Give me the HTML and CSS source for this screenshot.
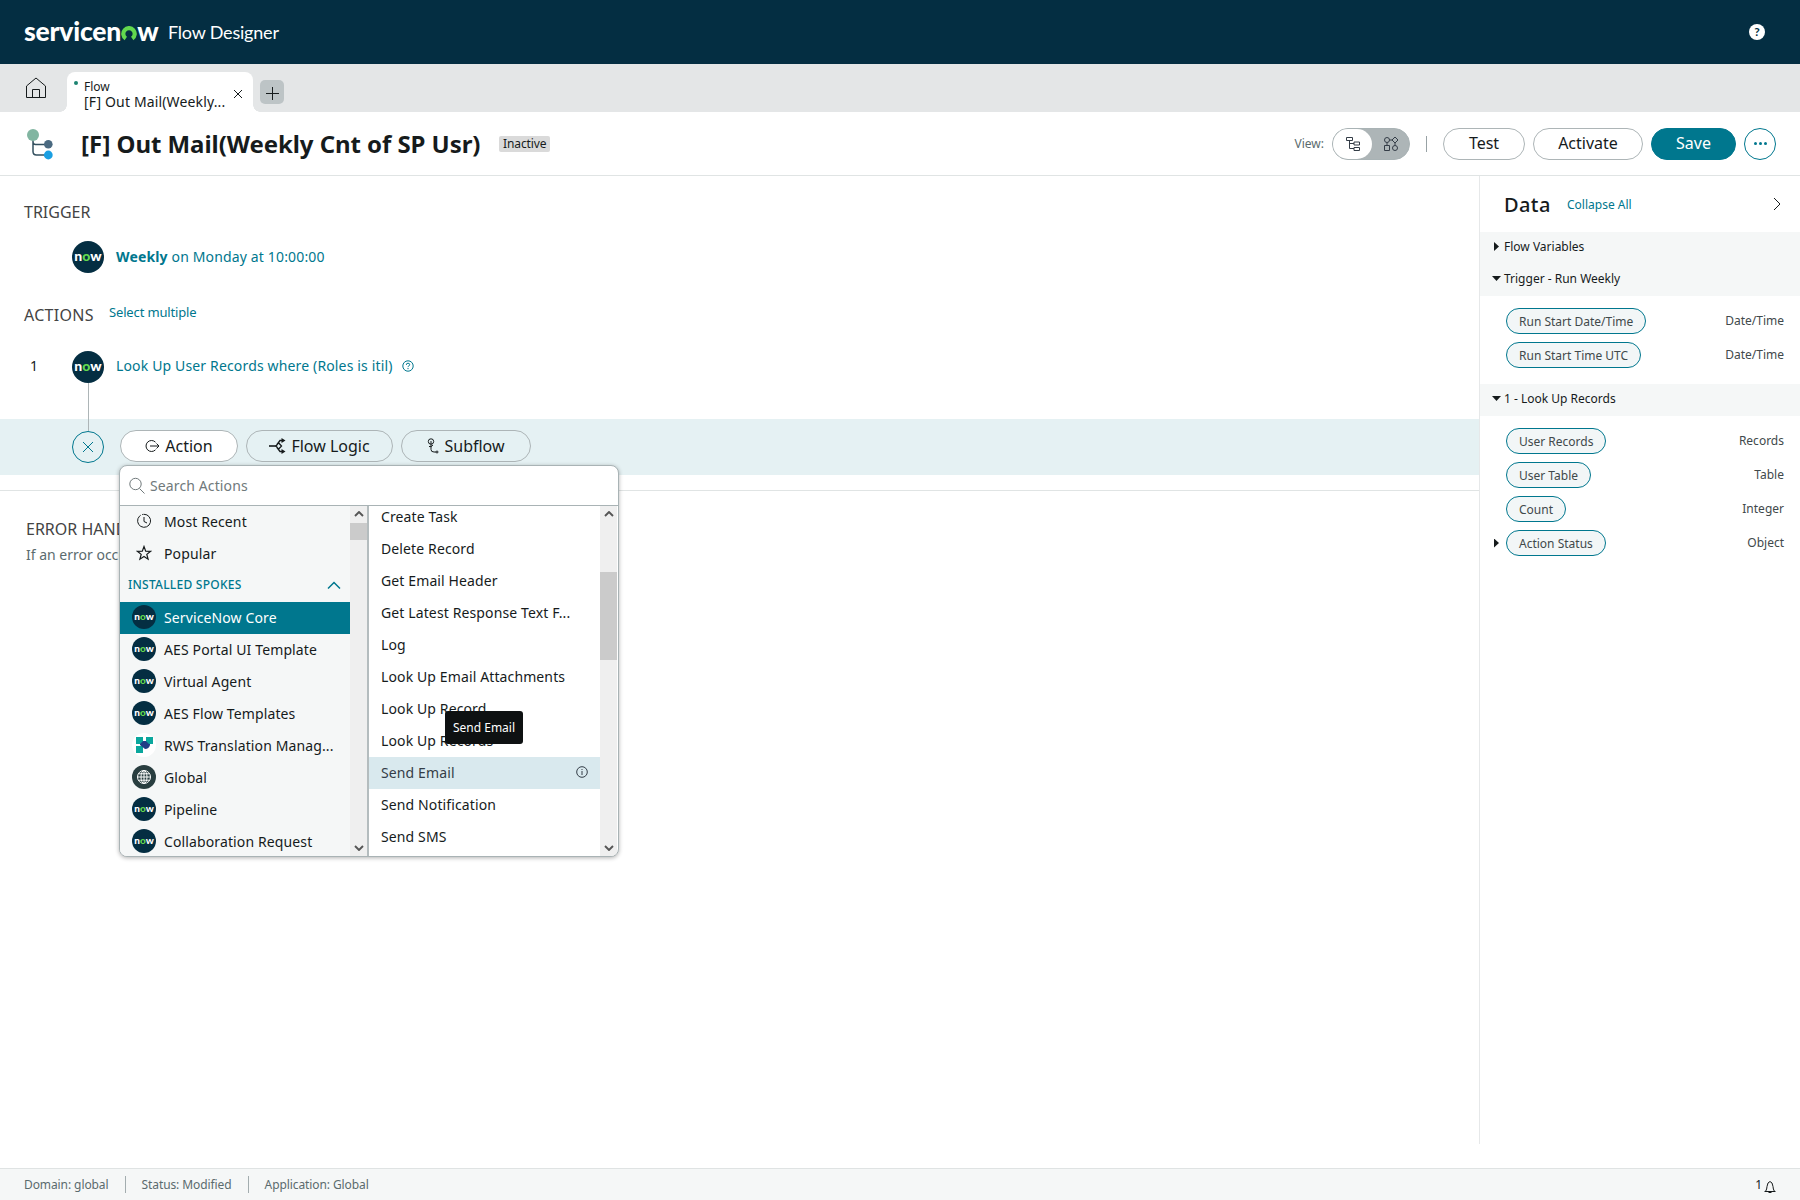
FILE: index.html
```html
<!DOCTYPE html>
<html lang="en">

<head>
    <meta charset="UTF-8">
    <meta name="viewport" content="width=device-width, initial-scale=1.0">
    <title>Flow Designer</title>
    <link rel="stylesheet" href="styles.css">
</head>

<body>
    <header class="header">
        <div class="logo"><span>servicen</span><svg width="16" height="15" viewBox="0 0 16 15"><path d="M4.800 12.500A5.700 5.700 0 1 1 11.200 12.500" /></svg><span>w</span></div>
        <div class="product">Flow Designer</div>
        <div class="help">?</div>
    </header>

    <nav class="tabs">
        <svg class="home" width="22" height="22" viewBox="0 0 22 22"><path d="M1.500 20.500V9L11 1l9.500 8v11.500zM7.500 20.500v-8h7v8" /></svg>
        <div class="tab">
            <span class="dot"></span>
            <div class="tab-text">
                <div class="tab-type">Flow</div>
                <div class="tab-name">[F] Out Mail(Weekly...</div>
            </div>
            <svg class="tab-close" width="10" height="10" viewBox="0 0 10 10"><path d="M1 1l8 8M9 1L1 9" /></svg>
        </div>
        <div class="tab-add">
            <svg width="14" height="14" viewBox="0 0 14 14"><path d="M7.500 1v13M1 7.500h13" /></svg>
        </div>
    </nav>

    <div class="title-bar">
        <svg class="flow-icon" width="28" height="32" viewBox="0 0 28 32">
            <path d="M7 8v15.500q0 3.500 3.500 3.500H20M7 14q0 2.500 2.500 2.500H20" fill="none" stroke="#33505f" stroke-width="1.500" />
            <g stroke="none">
                <circle cx="7" cy="7" r="6" fill="#81b5a1" />
                <circle cx="22.300" cy="16.200" r="4.300" fill="#4a6980" />
                <circle cx="22.300" cy="27" r="4.400" fill="#1b9fe2" />
            </g>
        </svg>
        <h1>[F] Out Mail(Weekly Cnt of SP Usr)</h1>
        <span class="state">Inactive</span>
        <div class="tools">
            <span class="view-label">View:</span>
            <div class="toggle">
                <span class="toggle-on">
                    <svg width="14" height="14" viewBox="0 0 14 14"><path d="M.5.500h6v3h-6zM3.500 3.500v8H8M3.500 6.500H8M8 5h5.500v3H8zM8 10.500h5.500v3H8z" /></svg>
                </span>
                <svg class="toggle-off" width="16" height="16" viewBox="0 0 16 16"><circle cx="4" cy="4" r="2.500" /><path d="M12 1l3 3-3 3-3-3zM1.500 9.500h5v5h-5zM6.500 4H9M4 6.500v3M12 7v2.500" /><circle cx="12" cy="12" r="2.500" /></svg>
            </div>
            <span class="divider"></span>
            <button class="btn btn-test">Test</button>
            <button class="btn btn-activate">Activate</button>
            <button class="btn btn-save">Save</button>
            <button class="btn-more"><i></i><i></i><i></i></button>
        </div>
    </div>

    <div class="content">
        <main class="flow">
            <h2 class="trigger-title">TRIGGER</h2>
            <div class="step">
                <span class="now">n<b>o</b>w</span>
                <a class="step-text"><strong>Weekly</strong> on Monday at 10:00:00</a>
            </div>
            <div class="actions-head">
                <h2>ACTIONS</h2>
                <a>Select multiple</a>
            </div>
            <div class="step step-action">
                <span class="num">1</span>
                <span class="now">n<b>o</b>w</span>
                <a class="step-text">Look Up User Records where (Roles is itil)</a>
                <svg class="hint" width="12" height="12" viewBox="0 0 12 12"><circle cx="6" cy="6" r="5.200" /><path d="M4.300 4.900q0-1.700 1.700-1.700t1.700 1.500q0 .9-1.100 1.300-.6.300-.6 1.100M6 8v1.200" /></svg>
            </div>
            <div class="line"></div>
            <div class="add-row">
                <button class="cancel">
                    <svg width="12" height="12" viewBox="0 0 12 12"><path d="M1 1l10 10M11 1L1 11" /></svg>
                </button>
                <button class="pill pill-action">
                    <svg width="15" height="14" viewBox="0 0 15 14"><path d="M10.500 3.200A5.500 5.500 0 1 0 10.500 10.800M5 7h9M11.500 4.500L14 7l-2.500 2.500" /></svg>
                    <span>Action</span>
                </button>
                <button class="pill pill-logic">
                    <svg width="17" height="18" viewBox="0 0 17 18"><path d="M0 9h7" stroke-width="1.600" /><path d="M9.500 5.800L12.500 9l-3 3.200L7 9zM8 7.500l3-4h3M8 10.500l3 4h3" stroke-width="1.300" /><path class="solid" d="M12.500 1l4 2.500-4 2.500zM12.500 12l4 2.500-4 2.500z" /></svg>
                    <span>Flow Logic</span>
                </button>
                <button class="pill pill-sub">
                    <svg width="12" height="16" viewBox="0 0 12 16"><circle cx="4" cy="3.500" r="2.700" /><path d="M4 3v8.500q0 2.500 3 2.500h2M2 8.500q2 1 4-1.500" /><circle cx="10" cy="14" r="1" /></svg>
                    <span>Subflow</span>
                </button>
            </div>
            <section class="errors">
                <h2>ERROR HANDLER</h2>
                <p>If an error occurs</p>
            </section>

            <div class="picker">
                <div class="search">
                    <svg width="16" height="18" viewBox="0 0 16 18"><circle cx="6.500" cy="7" r="5.700" /><path d="M10.500 11.500l5 5" /></svg>
                    <span>Search Actions</span>
                </div>
                <div class="columns">
                    <div class="spokes">
                        <div class="row">
                            <svg class="line-icon" width="16" height="16" viewBox="0 0 16 16"><path d="M8 1.300a6.500 6.500 0 1 1-4.500 1.900" /><path d="M3.500 3.200A6.500 6.500 0 0 1 8 1.300" stroke-dasharray="1.500 1.500" /><path d="M8 4v4.500l3 1.500" /></svg>
                            Most Recent
                        </div>
                        <div class="row">
                            <svg class="line-icon" width="16" height="16" viewBox="0 0 16 16"><path d="M8 1.500l1.700 4.600 4.900.2-3.800 3.100 1.300 4.800L8 11.500l-4.100 2.700 1.300-4.800L1.400 6.300l4.900-.2z" stroke-width="1.200" /></svg>
                            Popular
                        </div>
                        <div class="group">
                            INSTALLED SPOKES
                            <svg width="14" height="8" viewBox="0 0 14 8"><path d="M1 7.500l6-6 6 6" /></svg>
                        </div>
                        <div class="row selected"><span class="now">n<b>o</b>w</span>ServiceNow Core</div>
                        <div class="row"><span class="now">n<b>o</b>w</span>AES Portal UI Template</div>
                        <div class="row"><span class="now">n<b>o</b>w</span>Virtual Agent</div>
                        <div class="row"><span class="now">n<b>o</b>w</span>AES Flow Templates</div>
                        <div class="row">
                            <svg class="app" width="24" height="24" viewBox="0 0 24 24"><circle cx="12" cy="12" r="12" fill="#fff" /><path d="M4 13h7v7H4z" fill="#0aa79d" /><path d="M8 8h10v4q-1 4-5 4l-5-4z" fill="#213f86" /><path d="M4 4h7v4l-3 3H4zM14 4h7v7h-4l-3-3z" fill="#0aa79d" /></svg>
                            RWS Translation Manag...
                        </div>
                        <div class="row">
                            <svg class="app" width="24" height="24" viewBox="0 0 24 24"><circle cx="12" cy="12" r="12" fill="#293e40" /><g fill="none" stroke="#fff"><circle cx="12" cy="12" r="6.500" /><ellipse cx="12" cy="12" rx="3" ry="6.500" /><path d="M12 5.500v13M5.500 12h13M6.500 8.800h11M6.500 15.200h11" /></g></svg>
                            Global
                        </div>
                        <div class="row"><span class="now">n<b>o</b>w</span>Pipeline</div>
                        <div class="row"><span class="now">n<b>o</b>w</span>Collaboration Request</div>
                    </div>
                    <div class="scroll scroll-left">
                        <svg width="10" height="6" viewBox="0 0 10 6"><path d="M1 5l4-4 4 4" /></svg>
                        <span class="thumb"></span>
                        <svg class="down" width="10" height="6" viewBox="0 0 10 6"><path d="M1 1l4 4 4-4" /></svg>
                    </div>
                    <div class="action-list">
                        <div class="item">Create Task</div>
                        <div class="item">Delete Record</div>
                        <div class="item">Get Email Header</div>
                        <div class="item">Get Latest Response Text F...</div>
                        <div class="item">Log</div>
                        <div class="item">Look Up Email Attachments</div>
                        <div class="item">Look Up Record</div>
                        <div class="item">Look Up Records</div>
                        <div class="item hover">Send Email
                            <svg width="12" height="12" viewBox="0 0 12 12"><circle cx="6" cy="6" r="5.300" /><path d="M6 5v4M6 3v1" /></svg>
                        </div>
                        <div class="item">Send Notification</div>
                        <div class="item">Send SMS</div>
                    </div>
                    <div class="scroll scroll-right">
                        <svg width="10" height="6" viewBox="0 0 10 6"><path d="M1 5l4-4 4 4" /></svg>
                        <span class="thumb"></span>
                        <svg class="down" width="10" height="6" viewBox="0 0 10 6"><path d="M1 1l4 4 4-4" /></svg>
                    </div>
                </div>
                <div class="tooltip">Send Email</div>
            </div>
        </main>

        <aside class="data">
            <div class="data-head">
                <h3>Data</h3>
                <a>Collapse All</a>
                <svg width="8" height="14" viewBox="0 0 8 14"><path d="M1 1l6 6-6 6" /></svg>
            </div>
            <div class="data-group"><i class="closed"></i>Flow Variables</div>
            <div class="data-group"><i class="open"></i>Trigger - Run Weekly</div>
            <div class="pills">
                <div class="pill-row"><span class="data-pill">Run Start Date/Time</span><span class="type">Date/Time</span></div>
                <div class="pill-row"><span class="data-pill">Run Start Time UTC</span><span class="type">Date/Time</span></div>
            </div>
            <div class="data-group"><i class="open"></i>1 - Look Up Records</div>
            <div class="pills">
                <div class="pill-row"><span class="data-pill">User Records</span><span class="type">Records</span></div>
                <div class="pill-row"><span class="data-pill">User Table</span><span class="type">Table</span></div>
                <div class="pill-row"><span class="data-pill">Count</span><span class="type">Integer</span></div>
                <div class="pill-row has-children"><i class="closed"></i><span class="data-pill">Action Status</span><span class="type">Object</span></div>
            </div>
        </aside>
    </div>

    <footer class="footer">
        <span>Domain: global</span>
        <span>Status: Modified</span>
        <span>Application: Global</span>
        <div class="alerts">1
            <svg width="12" height="13" viewBox="0 0 12 13"><path d="M.5 11.500h11M1.500 11.500Q3 9 3 6.500 3.500 2 6 1.500q2.500.5 3 5 0 2.500 1.500 5M4.500 12.500h3" /></svg>
        </div>
    </footer>
</body>

</html>
```

FILE: styles.css
```css
* {
    box-sizing: border-box;
}

body {
    display: flex;
    flex-direction: column;
    height: 1200px;
    margin: 0;
    overflow: hidden;
    background: #fff;
    color: #161b1c;
    font-family: "Noto Sans", "Open Sans", sans-serif;
    font-size: 14px;
    white-space: nowrap;
}

h1, h2, h3, p {
    margin: 0;
    font-weight: 400;
}

svg {
    flex: none;
    fill: none;
    stroke: currentColor;
}

a {
    color: #00778e;
}

button {
    padding: 0;
    background: none;
    color: inherit;
    font: inherit;
}

/* header */
.header {
    display: flex;
    align-items: center;
    height: 64px;
    padding: 0 35px 0 24px;
    background: #042e42;
    color: #fff;
    font-family: Lato, sans-serif;
}

.logo {
    display: flex;
    align-items: baseline;
    width: 144px;
    padding-bottom: 2px;
    font-size: 26.500px;
    font-weight: 900;
    letter-spacing: -.2px;
    line-height: 30px;
}

.logo svg {
    stroke: #62d84e;
    stroke-width: 4.200;
}

.product {
    font-size: 18px;
    letter-spacing: -.2px;
}

.help {
    width: 16px;
    height: 16px;
    margin-left: auto;
    border-radius: 50%;
    background: #fff;
    color: #042e42;
    font-size: 12px;
    font-weight: 700;
    line-height: 16px;
    text-align: center;
}

/* tabs */
.tabs {
    display: flex;
    height: 48px;
    padding: 8px 0 0 25px;
    background: #e4e6e7;
}

.home {
    margin: 5px 20px 0 0;
}

.tab {
    position: relative;
    display: flex;
    width: 186px;
    padding: 6px 10px 0 9px;
    border-radius: 8px 8px 0 0;
    background: #fff;
}

.tab::before,
.tab::after {
    content: "";
    position: absolute;
    bottom: 0;
    width: 7px;
    height: 7px;
}

.tab::before {
    left: -7px;
    background: radial-gradient(circle at 0 0, #e4e6e7 6.500px, #fff 7px);
}

.tab::after {
    right: -7px;
    background: radial-gradient(circle at 100% 0, #e4e6e7 6.500px, #fff 7px);
}

.dot {
    width: 4px;
    height: 4px;
    margin: 3px 4px 0 -2px;
    border-radius: 50%;
    background: #1c8371;
}

.tab-text {
    width: 144px;
    margin-left: 2px;
}

.tab-type {
    font-size: 12px;
    line-height: 17px;
}

.tab-name {
    font-size: 14px;
    letter-spacing: .15px;
    line-height: 13px;
}

.tab-close {
    margin-top: 11px;
    margin-left: 5px;
}

.tab-add {
    display: flex;
    align-items: center;
    justify-content: center;
    width: 24px;
    height: 24px;
    margin: 8px 0 0 7px;
    padding-top: 2px;
    border-radius: 5px;
    background: #bdc4c6;
}

/* title bar */
.title-bar {
    display: flex;
    align-items: center;
    height: 64px;
    padding: 0 24px 0 26px;
    border-bottom: 1px solid #e0e4e4;
}

h1 {
    width: 418px;
    margin-left: 27px;
    font-size: 24px;
    font-weight: 700;
    letter-spacing: -.06px;
}

.state {
    padding: 0 4px;
    border-radius: 2px;
    background: #dadada;
    font-size: 12px;
    letter-spacing: -.1px;
    line-height: 16px;
}

.tools {
    display: flex;
    align-items: center;
    gap: 8px;
    margin-left: auto;
}

.view-label {
    color: #5b6b6e;
    font-size: 12px;
}

.toggle {
    display: flex;
    align-items: center;
    width: 78px;
    height: 32px;
    border: 1px solid #a9b3b5;
    border-radius: 16px;
    background: #adb5b7;
    color: #343d47;
}

.toggle-on {
    display: flex;
    align-items: center;
    justify-content: center;
    width: 39px;
    height: 30px;
    border-radius: 15px;
    background: #fff;
}

.toggle-off {
    margin-left: 11px;
}

.divider {
    width: 1px;
    height: 16px;
    margin: 0 8px;
    background: #98a2a5;
}

.btn {
    height: 32px;
    padding-bottom: 2px;
    border: 1px solid #adb5b7;
    border-radius: 16px;
    font-size: 16px;
}

.btn-test {
    width: 82px;
}

.btn-activate {
    width: 110px;
}

.btn-save {
    width: 85px;
    border-color: #00778e;
    background: #00778e;
    color: #fff;
}

.btn-more {
    display: flex;
    align-items: center;
    justify-content: center;
    gap: 2px;
    width: 32px;
    height: 32px;
    border: 1px solid #00778e;
    border-radius: 50%;
}

.btn-more i {
    width: 3px;
    height: 3px;
    border-radius: 50%;
    background: #00778e;
}

/* flow */
.content {
    display: flex;
    height: 992px;
}

.flow {
    position: relative;
    width: 1479px;
    padding-top: 24px;
}

h2 {
    color: #444;
    font-size: 16px;
    line-height: 24px;
}

.trigger-title {
    padding-left: 24px;
}

.step {
    display: flex;
    align-items: center;
    height: 32px;
    margin-top: 17px;
    padding-left: 72px;
}

.step-action {
    margin-top: 24px;
    padding-left: 30px;
}

.step-text {
    margin-left: 12px;
    padding-bottom: 1px;
    letter-spacing: .15px;
}

.step-action .step-text {
    padding-bottom: 4px;
}

.num {
    width: 42px;
    padding-bottom: 3px;
}

.hint {
    margin: 0 0 3px 9px;
    color: #00778e;
}

.now {
    display: inline-block;
    flex: none;
    width: 32px;
    height: 32px;
    border-radius: 50%;
    background: #042e42;
    color: #fff;
    font: 900 14px/29px Lato, sans-serif;
    text-align: center;
}

.now b {
    color: #62d84e;
    font-weight: 900;
}

.actions-head {
    display: flex;
    margin-top: 30px;
    padding-left: 24px;
}

.actions-head h2 {
    width: 85px;
    letter-spacing: .3px;
}

.actions-head a {
    font-size: 13px;
    letter-spacing: -.15px;
    line-height: 18px;
}

.line {
    z-index: 1;
    position: relative;
    width: 1px;
    height: 48px;
    margin-left: 88px;
    background: #adb5b7;
}

.add-row {
    display: flex;
    gap: 8px;
    height: 56px;
    margin-top: -12px;
    padding: 11px 0 0 72px;
    background: #e5f1f3;
}

.cancel {
    display: flex;
    align-items: center;
    justify-content: center;
    width: 32px;
    height: 32px;
    margin: 1px 8px 0 0;
    border: 1px solid #00778e;
    border-radius: 50%;
    color: #00778e;
}

.pill {
    display: flex;
    align-items: center;
    justify-content: center;
    gap: 5px;
    height: 32px;
    border: 1px solid #adb5b7;
    border-radius: 16px;
    font-size: 16px;
}

.pill span {
    padding-bottom: 1px;
}

.pill-action {
    width: 118px;
    background: #fff;
}

.pill-logic {
    width: 147px;
}

.pill-sub {
    width: 130px;
}

.solid {
    fill: #161b1c;
    stroke: none;
}

.errors {
    margin-top: 15px;
    padding: 26px 0 0 26px;
    border-top: 1px solid #e0e4e4;
}

.errors p {
    padding-top: 4px;
    color: #5b6b6e;
    line-height: 20px;
}

/* action picker */
.picker {
    position: absolute;
    top: 289px;
    left: 119px;
    z-index: 2;
    width: 500px;
    height: 392px;
    border: 1px solid #a9b3b5;
    border-radius: 8px;
    background: #fff;
    box-shadow: 0 1px 4px rgba(0, 0, 0, .3);
    letter-spacing: .12px;
}

.search {
    display: flex;
    align-items: center;
    gap: 5px;
    height: 40px;
    padding-left: 9px;
    border-bottom: 1px solid #a9b3b5;
    color: #70797b;
}

.columns {
    display: flex;
    height: 350px;
    overflow: hidden;
    border-radius: 0 0 7px 7px;
}

.spokes {
    width: 230px;
    background: #f5f7f7;
}

.row {
    display: flex;
    align-items: center;
    gap: 8px;
    height: 32px;
    padding: 0 0 2px 12px;
}

.line-icon {
    margin: 0 4px;
}

.row .now {
    width: 24px;
    height: 24px;
    font-size: 10px;
    letter-spacing: 0;
    line-height: 22px;
}

.app {
    stroke: none;
}

.selected {
    background: #00778e;
    color: #fff;
}

.group {
    display: flex;
    align-items: center;
    justify-content: space-between;
    height: 32px;
    padding: 0 9px 3px 8px;
    color: #00778e;
    font-size: 12px;
    font-weight: 500;
    letter-spacing: .25px;
}

.group svg {
    stroke-width: 1.500;
}

.scroll {
    display: flex;
    flex-direction: column;
    align-items: center;
    width: 17px;
    padding: 5px 0;
    background: #efefef;
    color: #555;
}

.scroll svg {
    stroke-width: 1.900;
}

.thumb {
    width: 17px;
    background: #cbcbcb;
}

.down {
    margin-top: auto;
}

.scroll-left {
    width: 19px;
    border-right: 2px solid #b4bcbe;
}

.scroll-left .thumb {
    height: 17px;
    margin-top: 6px;
}

.scroll-right .thumb {
    height: 88px;
    margin-top: 55px;
}

.action-list {
    width: 231px;
}

.item {
    display: flex;
    align-items: center;
    justify-content: space-between;
    height: 32px;
    padding: 0 12px 2px;
}

.item:first-child {
    margin-top: -5px;
}

.hover {
    background: #d9e9ee;
    color: #343d47;
}

.tooltip {
    position: absolute;
    top: 245px;
    left: 325px;
    width: 78px;
    border-radius: 3px;
    background: #0e1112;
    color: #fff;
    font-size: 12px;
    letter-spacing: 0;
    line-height: 33px;
    text-align: center;
}

/* data panel */
.data {
    width: 321px;
    height: 968px;
    border-left: 1px solid #e6e8e9;
    font-size: 12px;
}

.data-head {
    display: flex;
    align-items: center;
    height: 56px;
    padding: 0 19px 0 24px;
}

.data-head h3 {
    width: 63px;
    font-size: 20px;
    font-weight: 500;
    letter-spacing: .4px;
}

.data-head svg {
    margin-left: auto;
}

.data-group {
    display: flex;
    align-items: center;
    height: 32px;
    padding: 0 0 3px 12px;
    background: #f5f7f7;
}

.open {
    width: 9px;
    height: 5px;
    margin-right: 3px;
    background: #161b1c;
    clip-path: polygon(0 0, 100% 0, 50% 100%);
}

.closed {
    width: 5px;
    height: 9px;
    margin: 0 5px 0 2px;
    background: #161b1c;
    clip-path: polygon(0 0, 100% 50%, 0 100%);
}

.pills {
    display: flex;
    flex-direction: column;
    gap: 8px;
    padding: 12px 16px 16px 26px;
}

.pill-row {
    display: flex;
    align-items: center;
    justify-content: space-between;
    height: 26px;
    color: #41494b;
}

.type {
    padding-bottom: 2px;
}

.data-pill {
    padding: 1px 12px 0;
    border: 1px solid #00778e;
    border-radius: 13px;
    background: #f2f6f7;
    line-height: 23px;
}

.has-children .closed {
    margin-left: -12px;
    margin-right: 7px;
}

.has-children .data-pill {
    margin-right: auto;
}

/* footer */
.footer {
    display: flex;
    align-items: center;
    height: 32px;
    padding: 0 24px;
    border-top: 1px solid #dfe3e3;
    background: #f5f7f7;
    color: #5b6b6e;
    font-size: 12px;
    letter-spacing: -.09px;
}

.footer span + span {
    margin-left: 16px;
    padding-left: 16px;
    border-left: 1px solid #a3adaf;
}

.alerts {
    display: flex;
    align-items: center;
    gap: 2px;
    margin-left: auto;
    color: #161b1c;
}

.alerts svg {
    margin-top: 3px;
}
```
